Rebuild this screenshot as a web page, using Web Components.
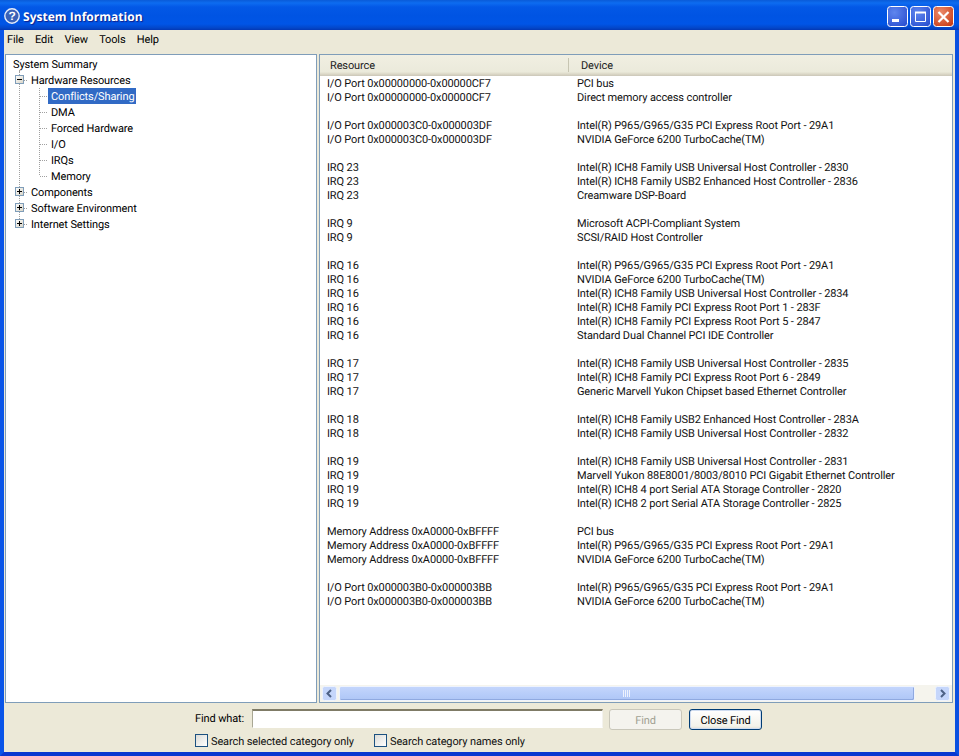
<!DOCTYPE html>
<html><head><meta charset="utf-8"><title>System Information</title>
<style>
html,body{margin:0;padding:0;width:959px;height:756px;overflow:hidden;background:#ece9d8}
body{font:11px/14px Roboto,sans-serif;color:#000;letter-spacing:-.12px;text-rendering:geometricPrecision}
</style></head><body>
<xp-window></xp-window>
<script>
const FONT='Roboto,"Liberation Sans",sans-serif';
function def(name,html,init){
  customElements.define(name,class extends HTMLElement{
    constructor(){super();const r=this.attachShadow({mode:'open'});r.innerHTML=typeof html==='function'?html(this):html;}
    connectedCallback(){if(init&&!this._i){this._i=1;init.call(this,this.shadowRoot);}}
  });
}
const BTN=(bg,inner)=>`<svg width="21" height="21" viewBox="0 0 21 21" style="display:block"><defs><radialGradient id="g${bg[0].slice(1)}" cx="35%" cy="30%" r="85%"><stop offset="0" stop-color="${bg[0]}"/><stop offset="1" stop-color="${bg[1]}"/></radialGradient></defs><rect x=".5" y=".5" width="20" height="20" rx="3" fill="url(#g${bg[0].slice(1)})" stroke="#fff"/>${inner}</svg>`;

def('title-bar',`<style>
:host{display:flex;align-items:center;height:30px;flex:none;padding:0 5px 0 4px;box-sizing:border-box;
background:linear-gradient(180deg,#0a5bd8 0,#0d6cf0 3px,#0358e6 7px,#0054e3 16px,#0055e6 24px,#0346c8 28px,#0337b4 30px);color:#fff}
svg.i{flex:none;margin:2px 3px 0 0}
.t{flex:1;font:bold 12px/16px "Open Sans",sans-serif;letter-spacing:.02px;text-shadow:1px 1px 1px #0f1f8a;white-space:nowrap;margin-top:3px}
.b{display:flex;gap:2px;margin-top:3px}
</style>
<svg class="i" width="16" height="16" viewBox="0 0 16 16"><circle cx="8" cy="8" r="7.2" fill="#3a62b8" stroke="#e6ecf8" stroke-width="1.4"/><text x="8" y="12.2" text-anchor="middle" font-family="Liberation Sans" font-weight="bold" font-size="12" fill="#fff">?</text></svg>
<span class="t">System Information</span>
<span class="b">
${BTN(['#5f86ee','#2a4fd0'],'<rect x="5" y="13" width="7" height="3" fill="#fff"/>')}
${BTN(['#5f86ee','#2a4fd0'],'<path d="M5.5 6.5h10v9h-10z" fill="none" stroke="#fff"/><path d="M5 6.5h11" stroke="#fff" stroke-width="2"/>')}
${BTN(['#ec8b6c','#c83a14'],'<path d="M5.5 6l10 10M15.5 6l-10 10" stroke="#fff" stroke-width="2.2"/>')}
</span>`);

def('menu-bar',`<style>
:host{display:flex;height:20px;flex:none;background:#ece9d8;padding-left:3px;gap:11.3px;align-items:center;font:11px/14px ${FONT};box-sizing:border-box}
</style><span>File</span><span>Edit</span><span>View</span><span>Tools</span><span>Help</span>`);

def('tree-row',(h)=>{
  const kind=h.getAttribute('kind'),sel=h.hasAttribute('sel'),last=h.hasAttribute('last'),end=h.hasAttribute('end');
  const dot='stroke="#a0a0a0" stroke-dasharray="1 1" fill="none"';
  const base=`:host{display:flex;height:16px;align-items:center;font:11px/14px ${FONT}}svg{flex:none;display:block}i{flex:none;display:block}span{white-space:nowrap;height:16px;line-height:18px}`;
  if(kind==='root')return `<style>${base}:host{position:relative}:host::after{content:"";position:absolute;left:13px;top:14px;height:2px;border-left:1px dotted #a0a0a0}</style><i style="width:7px"></i><span>${h.textContent}</span>`;
  if(kind==='plus'||kind==='minus'){
    const g=`<svg width="16" height="16" viewBox="0 0 16 16"><path d="M7.5 0V${end?3:16}" ${dot}/><path d="M12 8.5h4" ${dot}/><rect x="3.5" y="3.5" width="8" height="8" fill="url(#bx${kind})" stroke="#7f9db9"/><defs><linearGradient id="bx${kind}" x1="0" y1="0" x2="1" y2="1"><stop offset="0" stop-color="#fff"/><stop offset="1" stop-color="#d6d2c4"/></linearGradient></defs><path d="M5 7.5h5${kind==='plus'?'M7.5 5v5':''}" stroke="#000"/></svg><i style="width:3px"></i>`;
    return `<style>${base}</style><i style="width:6px"></i>${g}<span>${h.textContent}</span>`;
  }
  const g=`<svg width="36" height="16" viewBox="0 0 36 16"><path d="M7.5 0V16" ${dot}/><path d="M27.5 0V${last?8:16}" ${dot}/><path d="M28 8.5h8" ${dot}/></svg>`;
  return `<style>${base}
  span{padding:0 2px 0 3px;box-sizing:border-box;${sel?'background:#316ac5;color:#fff':''}}</style><i style="width:6px"></i>${g}<span>${h.textContent}</span>`;
});

def('tree-pane',`<style>
:host{display:block;width:312px;flex:none;background:#fff;border:1px solid #7f9db9;box-sizing:border-box;padding-top:1px;overflow:hidden}
</style><slot></slot>`);

def('list-header',`<style>
:host{display:flex;height:21px;flex:none;background:linear-gradient(180deg,#f1efe2 0,#ebeadb 80%,#dcd9c8 90%,#cbc7b8 100%);font:11px/22px ${FONT};box-sizing:border-box;color:#222}
.a{width:249px;padding-left:10px;box-sizing:border-box;position:relative}
.a:after{content:"";position:absolute;right:0;top:3px;bottom:4px;width:1px;background:#c7c5b2}
.b{padding-left:12px}
</style><span class="a">Resource</span><span class="b">Device</span>`);

def('list-row',(h)=>`<style>
:host{display:flex;height:14px;font:11px/16px ${FONT};white-space:nowrap;color:#111}
.a{width:257px;padding-left:7px;box-sizing:border-box;flex:none}
span{height:14px}
</style><span class="a">${h.getAttribute('r')||''}</span><span class="c">${h.getAttribute('d')||''}</span>`);

const GROUPS=[
[['I/O Port 0x00000000-0x00000CF7','PCI bus'],['I/O Port 0x00000000-0x00000CF7','Direct memory access controller']],
[['I/O Port 0x000003C0-0x000003DF','Intel(R) P965/G965/G35 PCI Express Root Port - 29A1'],['I/O Port 0x000003C0-0x000003DF','NVIDIA GeForce 6200 TurboCache(TM)']],
[['IRQ 23','Intel(R) ICH8 Family USB Universal Host Controller - 2830'],['IRQ 23','Intel(R) ICH8 Family USB2 Enhanced Host Controller - 2836'],['IRQ 23','Creamware DSP-Board']],
[['IRQ 9','Microsoft ACPI-Compliant System'],['IRQ 9','SCSI/RAID Host Controller']],
[['IRQ 16','Intel(R) P965/G965/G35 PCI Express Root Port - 29A1'],['IRQ 16','NVIDIA GeForce 6200 TurboCache(TM)'],['IRQ 16','Intel(R) ICH8 Family USB Universal Host Controller - 2834'],['IRQ 16','Intel(R) ICH8 Family PCI Express Root Port 1 - 283F'],['IRQ 16','Intel(R) ICH8 Family PCI Express Root Port 5 - 2847'],['IRQ 16','Standard Dual Channel PCI IDE Controller']],
[['IRQ 17','Intel(R) ICH8 Family USB Universal Host Controller - 2835'],['IRQ 17','Intel(R) ICH8 Family PCI Express Root Port 6 - 2849'],['IRQ 17','Generic Marvell Yukon Chipset based Ethernet Controller']],
[['IRQ 18','Intel(R) ICH8 Family USB2 Enhanced Host Controller - 283A'],['IRQ 18','Intel(R) ICH8 Family USB Universal Host Controller - 2832']],
[['IRQ 19','Intel(R) ICH8 Family USB Universal Host Controller - 2831'],['IRQ 19','Marvell Yukon 88E8001/8003/8010 PCI Gigabit Ethernet Controller'],['IRQ 19','Intel(R) ICH8 4 port Serial ATA Storage Controller - 2820'],['IRQ 19','Intel(R) ICH8 2 port Serial ATA Storage Controller - 2825']],
[['Memory Address 0xA0000-0xBFFFF','PCI bus'],['Memory Address 0xA0000-0xBFFFF','Intel(R) P965/G965/G35 PCI Express Root Port - 29A1'],['Memory Address 0xA0000-0xBFFFF','NVIDIA GeForce 6200 TurboCache(TM)']],
[['I/O Port 0x000003B0-0x000003BB','Intel(R) P965/G965/G35 PCI Express Root Port - 29A1'],['I/O Port 0x000003B0-0x000003BB','NVIDIA GeForce 6200 TurboCache(TM)']]
];
def('list-body',`<style>:host{display:block;flex:1;min-height:0;background:#fff}</style><div></div>`,function(r){
  const d=r.querySelector('div');
  GROUPS.forEach((g,i)=>{
    if(i)d.appendChild(document.createElement('list-row'));
    g.forEach(([a,b])=>{const e=document.createElement('list-row');
      e.shadowRoot.querySelector('.a').textContent=a;e.shadowRoot.querySelector('.c').textContent=b;d.appendChild(e);});
  });
});

const ARW=(p)=>`<svg width="15" height="15" viewBox="0 0 15 15" style="display:block;flex:none"><rect x=".5" y=".5" width="14" height="14" rx="2" fill="#c5d6fb" stroke="#eef3fd"/><path d="${p}" fill="none" stroke="#4d6185" stroke-width="2"/></svg>`;
def('h-scroll',`<style>
:host{display:flex;align-items:center;height:17px;flex:none;background:#f5f4ed;padding:0 2px;box-sizing:border-box}
.t{margin:0 2px 0 2px;width:576px;height:15px;box-sizing:border-box;border:1px solid #eef3fd;border-radius:2px;background:linear-gradient(180deg,#c3d5fc,#b6ccf9 60%,#aec6f6);box-shadow:inset -1px -1px 0 #8fa9e0;display:flex;align-items:center;justify-content:center}
.g{flex:1}
</style>${ARW('M9 4L5.5 7.5 9 11')}<span class="t"><svg width="8" height="7"><path d="M.5 0v7M2.5 0v7M4.5 0v7M6.5 0v7" stroke="#eef3fd"/></svg></span><span class="g"></span>${ARW('M6 4l3.5 3.5L6 11')}`);

def('list-pane',`<style>
:host{display:flex;flex-direction:column;width:634px;flex:none;background:#fff;border:1px solid #7f9db9;box-sizing:border-box}
</style><list-header></list-header><list-body></list-body><h-scroll></h-scroll>`);

def('xp-button',h=>`<style>
:host{display:block;width:73px;height:21px;box-sizing:border-box;border-radius:3px;text-align:center;font:11px/21px ${FONT};flex:none;
${h.hasAttribute('disabled')?'border:1px solid #c9c7ba;background:#f4f3ee;color:#a1a192':'border:1px solid #003c74;background:linear-gradient(180deg,#fff,#f3f2ea 85%,#e2dfd2);box-shadow:inset 0 0 0 1px #cfdcf0'}}
</style><slot></slot>`);

def('xp-check',`<style>
:host{display:inline-flex;align-items:center;font:11px/14px ${FONT};color:#111;white-space:nowrap}
i{display:block;width:13px;height:13px;box-sizing:border-box;border:1px solid #1c5180;background:linear-gradient(135deg,#dcdcd7,#fff);margin-right:3px}
b{font-weight:400;padding-top:2px}
</style><i></i><b><slot></slot></b>`);

def('find-bar',`<style>
:host{display:grid;flex:none;height:49px;box-sizing:border-box;padding:6px 0 0 191px;grid-template-rows:21px 15px;row-gap:3px;background:#ece9d8;font:11px/14px ${FONT}}
.r{display:flex;align-items:center}
.l{width:57px;flex:none;padding-bottom:2px}
.in{width:351px;height:19px;margin:0 6px 2px 0;box-sizing:border-box;border:1px solid;border-color:#7f7b66 #f4f3ee #fff #a9a794;border-top-width:2px;background:#fff;flex:none}
xp-button{margin-right:7px}
xp-check:first-child{width:179px}
</style>
<div class="r"><span class="l">Find what:</span><span class="in"></span><xp-button disabled>Find</xp-button><xp-button>Close Find</xp-button></div>
<div class="r"><xp-check>Search selected category only</xp-check><xp-check>Search category names only</xp-check></div>`);

def('xp-window',`<style>
:host{display:flex;flex-direction:column;width:959px;height:756px;box-sizing:border-box;background:#ece9d8;font:11px/14px ${FONT}}
.frame{flex:1;min-height:0;display:flex;flex-direction:column;border-left:4px solid #0a55e8;border-right:4px solid #0a50e0;border-bottom:4px solid #0a38d0}
.panes{flex:1;min-height:0;display:flex;gap:2px;padding:4px 2px 0 1px}
</style>
<title-bar></title-bar>
<div class="frame"><menu-bar></menu-bar>
<div class="panes">
<tree-pane>
<tree-row kind="root">System Summary</tree-row>
<tree-row kind="minus">Hardware Resources</tree-row>
<tree-row kind="leaf" sel>Conflicts/Sharing</tree-row>
<tree-row kind="leaf">DMA</tree-row>
<tree-row kind="leaf">Forced Hardware</tree-row>
<tree-row kind="leaf">I/O</tree-row>
<tree-row kind="leaf">IRQs</tree-row>
<tree-row kind="leaf" last>Memory</tree-row>
<tree-row kind="plus">Components</tree-row>
<tree-row kind="plus">Software Environment</tree-row>
<tree-row kind="plus" end>Internet Settings</tree-row>
</tree-pane>
<list-pane></list-pane>
</div>
<find-bar></find-bar></div>`);
</script>
</body></html>
